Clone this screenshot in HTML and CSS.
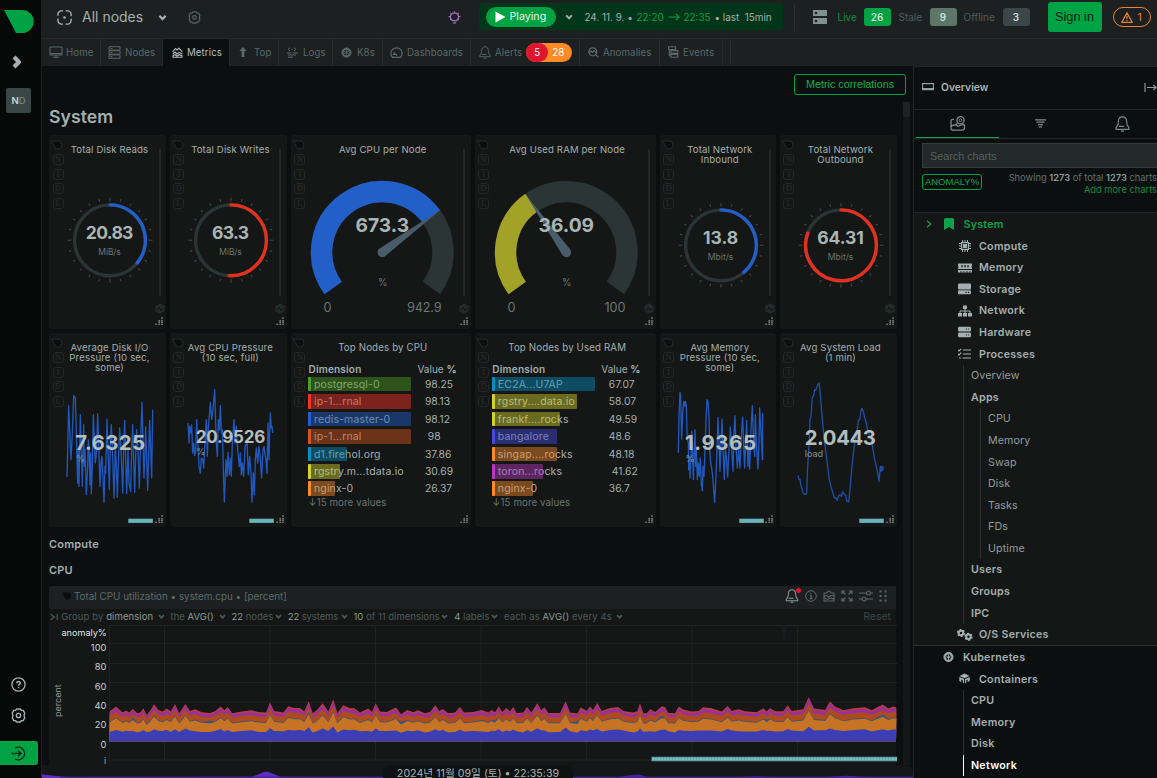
FILE: index.html
```html
<!DOCTYPE html>
<html lang="en">
<head>
<meta charset="utf-8">
<title>All nodes - Metrics</title>
<link rel="stylesheet" href="styles.css">
</head>
<body>
<svg class="defs" aria-hidden="true">
  <symbol id="chev" viewBox="0 0 8 8"><path d="M1.2 2.4 4 5.4 6.8 2.4" fill="none" stroke="currentColor" stroke-width="2"/></symbol>
  <symbol id="gear" viewBox="0 0 14 14"><path d="M5.4.9h3.2l1.1 1.2 1.7.1 1.4 2.6-.5 1.6v1.2l.5 1.6-1.4 2.6-1.7.1-1.1 1.2H5.4l-1.1-1.2-1.7-.1L1.2 9.2l.5-1.6V6.4l-.5-1.6 1.4-2.6 1.7-.1z" fill="none" stroke="currentColor" stroke-width="1.3"/><circle cx="7" cy="7" r="2" fill="none" stroke="currentColor" stroke-width="1.3"/></symbol>
  <symbol id="drop" viewBox="0 0 12 9"><path d="M.5.5H7a4 4 0 0 1 0 8H5z" fill="currentColor"/></symbol>
  <symbol id="bell" viewBox="0 0 14 15"><path d="M7 .8c-2.6 0-3.8 2-3.9 4.400L2.700 8.300 1 11v1.500h12V11l-1.700-2.700-.4-3.100C10.800 2.800 9.600.8 7 .8zM5.500 14.100h3M3.500 9.800h5" fill="none" stroke="currentColor" stroke-width="1.100"/></symbol>
  <symbol id="wheel" viewBox="0 0 12 12"><circle cx="6" cy="6" r="4" fill="none" stroke="currentColor" stroke-width="1.800"/><circle cx="6" cy="6" r="5" fill="none" stroke="currentColor" stroke-width="1"/><path d="M6 2v8M2.500 4l7 4M9.500 4l-7 4" stroke="currentColor" stroke-width=".9"/></symbol>
  <symbol id="grip" viewBox="0 0 8 8"><path d="M6.500.5h1v1h-1zM3.700 3.200h1v1h-1zM6.500 3.200h1v1h-1zM6.500 4.800h1v1h-1zM3.700 4.800h1v1h-1zM.6 6.800h1v1h-1zM3.700 6.800h1v1h-1zM6.500 6.800h1v1h-1z" fill="currentColor" stroke="currentColor" stroke-width=".3"/></symbol>
  <symbol id="pulse" viewBox="0 0 10 11"><path d="M5 .3 9.700 3v5L5 10.700.3 8V3z" fill="#262b2b"/><path d="M1.500 6.800h1.500l1.200-2.900L6 7.700l.8-1.500H8.500" fill="none" stroke="#0f1313" stroke-width=".9"/></symbol>
</svg>
<div class="app">
  <aside class="rail">
    <svg class="logo" viewBox="0 0 30 24"><path d="M0 0h18a11.700 11.500 0 0 1 0 23H12z" fill="#00a344"/></svg>
    <svg class="expand" viewBox="0 0 12 16"><path d="M3 3 8 8 3 13" fill="none" stroke="#a4b0af" stroke-width="4.200" stroke-linejoin="round"/></svg>
    <div class="avatar">N<span>D</span></div>
    <div class="rail-foot">
      <svg width="15" height="15" viewBox="0 0 15 15"><circle cx="7.500" cy="7.500" r="6.600" fill="none" stroke="currentColor" stroke-width="1.300"/><path d="M5.800 6.200c0-2.200 3.500-2.200 3.500-.1 0 1.300-1.700 1.200-1.700 2.600M7.600 9.900v1.400" fill="none" stroke="currentColor" stroke-width="1.500"/></svg>
      <svg width="15" height="15"><use href="#gear"/></svg>
      <div class="signin-rail"><svg width="15" height="15" viewBox="0 0 15 15"><path d="M4 2.100a6.300 6.300 0 1 1 0 10.800M.5 7.500h9M7 4.700l3 2.800-3 2.800" fill="none" stroke="#052e18" stroke-width="1.500"/></svg></div>
    </div>
  </aside>
  <div class="main">
    <header class="top">
      <svg class="i-space" viewBox="0 0 15 15"><rect x=".9" y=".9" width="13.200" height="13.200" rx="3.500" fill="none" stroke="currentColor" stroke-width="1.400" stroke-dasharray="9.100 2.600" stroke-dashoffset="-4.300"/><circle cx="7.500" cy="7.500" r="1.300" fill="currentColor"/></svg>
      <span class="room">All nodes</span>
      <svg class="i-chev"><use href="#chev"/></svg>
      <svg class="i-gear"><use href="#gear"/></svg>
      <svg class="i-bulb" viewBox="0 0 13 13"><path d="M4.700 9.700C2.300 8 2 5.500 3 3.700c1.500-2.500 5.500-2.500 7 0 1 1.800.7 4.300-1.700 6zM4.900 11.800h3.200" fill="none" stroke="currentColor" stroke-width="1.300"/><path d="M6.500.3v1.400M2 1.700l1.100 1M11 1.700l-1.100 1M.6 5.500h1.500M12.400 5.500h-1.500M2 9.200l1-.9M11 9.200l-1-.9" stroke="currentColor"/></svg>
      <div class="time">
        <div class="play"><svg viewBox="0 0 11 12"><path d="M.5.500 10.500 6 .5 11.500z" fill="#fff"/></svg>Playing</div>
        <svg class="t-chev"><use href="#chev"/></svg>
        <span class="t-date">24. 11. 9. •</span><span class="t-a">22:20</span>
        <svg class="t-arr" viewBox="0 0 12 8"><path d="M.5 4H11M8 1l3 3-3 3" fill="none" stroke="currentColor" stroke-width="1.100"/></svg>
        <span class="t-b">22:35</span><span class="t-last">• last&nbsp; 15min</span>
      </div>
      <i class="vr"></i>
      <svg class="i-srv" viewBox="0 0 14 14"><path d="M0 0h14v6H0zM0 8h14v6H0z" fill="currentColor"/><circle cx="3" cy="3" r="1.300" fill="#1c2021"/><circle cx="3" cy="11" r="1.300" fill="#1c2021"/></svg>
      <span class="s-live">Live</span><b class="badge b1">26</b>
      <span class="s-stale">Stale</span><b class="badge b2">9</b>
      <span class="s-off">Offline</span><b class="badge b3">3</b>
      <button class="signin">Sign in</button>
      <div class="warn"><svg viewBox="0 0 12 11"><path d="M6 .9 11.200 10.300H.8z" fill="none" stroke="currentColor" stroke-width="1.200" stroke-linejoin="round"/><path d="M6 4v3M6 8v1.200" stroke="currentColor" stroke-width="1.200"/></svg>1</div>
    </header>
    <nav class="tabs">
      <div class="tab w-home"><svg width="14" height="12" viewBox="0 0 14 12"><path d="M1 1h12v8H1zM1 7.500h12M7 9v2M4 11.300h6" fill="none" stroke="currentColor"/></svg>Home</div>
      <div class="tab w-nodes"><svg width="13" height="13" viewBox="0 0 13 13"><path d="M1 .7h11v3.400H1zM1 4.800h11v3.400H1zM1 8.900h11v3.400H1zM2.500 2.400h2M2.500 6.500h2M2.500 10.600h2" fill="none" stroke="currentColor"/></svg>Nodes</div>
      <div class="tab on w-metrics"><svg width="11" height="11" viewBox="0 0 11 11"><path d="M.6 4.800 3.500 1.500 5 3l2-1.700L10.400 5M.8 7l2.200-2L5 7l2.200-1.700L10.300 7M1 10.300V8.500l2-.8 2 1.300 2.200-1.300 2.800 1v1.600z" fill="none" stroke="currentColor" stroke-width="1.100"/></svg>Metrics</div>
      <div class="tab w-top"><svg width="8" height="10" viewBox="0 0 8 10"><path d="M4 0 7.700 4H5.400v6H2.600V4H.3z" fill="currentColor"/></svg>Top</div>
      <div class="tab w-logs"><svg width="11" height="11" viewBox="0 0 11 11"><path d="M3 .8 1 2.400 3 4M7 .8l2 1.600L7 4M5.500 2.400h-1M0 6h4M5.500 6H11M1 8h8M1 10.200h5" fill="none" stroke="currentColor"/></svg>Logs</div>
      <div class="tab w-k8s"><svg width="11" height="11"><use href="#wheel"/></svg>K8s</div>
      <div class="tab w-dash"><svg width="13" height="11" viewBox="0 0 13 11"><path d="M2.500 10.300A5.600 5.600 0 1 1 10.500 10.300zM3.500 5.500l3 2.500M3 7.500h3.500v1.300" fill="none" stroke="currentColor" stroke-width="1.200"/></svg>Dashboards</div>
      <div class="tab w-alerts"><svg width="12" height="13"><use href="#bell"/></svg>Alerts<span class="pill"><b>5</b><i>28</i></span></div>
      <div class="tab w-anom"><svg width="11" height="11" viewBox="0 0 11 11"><circle cx="4.800" cy="4.800" r="4" fill="none" stroke="currentColor" stroke-width="1.200"/><path d="M7.600 7.600 10.300 10.300M1 6l2-2 1.500 1.500L6 3.500 8 6" fill="none" stroke="currentColor" stroke-width="1.200"/></svg>Anomalies</div>
      <div class="tab w-events"><svg width="11" height="12" viewBox="0 0 11 12"><path d="M.6.7h7v2.800h-7zM2.800 4.600h7v2.800h-7zM2.800 8.500h7v2.800h-7zM1.300 3.500v6.300h1.500" fill="none" stroke="currentColor" stroke-width="1.100"/></svg>Events</div>
      <i class="tab-end"></i>
    </nav>
    <div class="body">
      <section class="content">
        <div class="toolbar"><button class="mc">Metric correlations</button></div>
        <div class="scroll">
          <div class="page">
            <h1>System</h1>
            <div class="grid">
              <div class="card"><h3>Total Disk Reads</h3><svg class="pie" data-y="105.300" data-end="130" data-c="#225fc9" data-v="20.83" data-w="47.500" data-u="MiB/s" data-uw="22.500"></svg></div>
              <div class="card"><h3>Total Disk Writes</h3><svg class="pie" data-y="105.300" data-end="183" data-c="#e3311f" data-v="63.3" data-w="37" data-u="MiB/s" data-uw="22.500"></svg></div>
              <div class="card"><h3>Avg CPU per Node</h3><svg class="gauge" data-f="0.714" data-c="#225fc9" data-v="673.3" data-w="53.500" data-max="942.9" data-mw="34.500" data-mx="133.300"></svg></div>
              <div class="card"><h3>Avg Used RAM per Node</h3><svg class="gauge" data-f="0.3609" data-c="#a2a128" data-v="36.09" data-w="55.500" data-max="100" data-mw="21" data-mx="140"></svg></div>
              <div class="card"><h3>Total Network Inbound</h3><svg class="pie" data-y="110.300" data-end="140" data-c="#225fc9" data-v="13.8" data-w="35" data-u="Mbit/s" data-uw="25.500"></svg></div>
              <div class="card"><h3>Total Network Outbound</h3><svg class="pie" data-y="110.300" data-end="290" data-c="#e3311f" data-v="64.31" data-w="46.500" data-u="Mbit/s" data-uw="25.500"></svg></div>

              <div class="card spark"><h3>Average Disk I/O Pressure (10 sec, some)</h3><svg class="line" data-s="0"></svg></div>
              <div class="card spark"><h3>Avg CPU Pressure (10 sec, full)</h3><svg class="line" data-s="1"></svg></div>
              <div class="card list"><h3>Top Nodes by CPU</h3><div class="table" data-t="0"></div></div>
              <div class="card list"><h3>Top Nodes by Used RAM</h3><div class="table" data-t="1"></div></div>
              <div class="card spark"><h3>Avg Memory Pressure (10 sec, some)</h3><svg class="line" data-s="2"></svg></div>
              <div class="card spark"><h3>Avg System Load (1 min)</h3><svg class="line" data-s="3"></svg></div>
            </div>
            <h2>Compute</h2>
            <h2 class="second">CPU</h2>
            <div class="chart">
              <div class="chart-head"><svg class="c-drop"><use href="#drop"/></svg><span class="c-title">Total CPU utilization • system.cpu • [percent]</span>
                <div class="tools">
                  <span class="bellwrap"><svg width="14" height="14"><use href="#bell"/></svg><i></i></span>
                  <svg width="12" height="12" viewBox="0 0 12 12"><circle cx="6" cy="6" r="5.300" fill="none" stroke="currentColor"/><path d="M6 3v1.300M5 5.500h1.200V8.500M4.700 8.700h2.800" fill="none" stroke="currentColor" stroke-width="1.200"/></svg>
                  <svg width="12" height="12" viewBox="0 0 12 12"><path d="M1 3h3l1-1.700h2L8 3h3v8H1zM1.500 6l2-.5 2 1.500L8 5.500l2.500.500M1.500 8l3 1.500 3-1.500 3 1" fill="none" stroke="currentColor" stroke-width="1.100"/></svg>
                  <svg width="12" height="12" viewBox="0 0 12 12"><path d="M1 4V1h3M8 1h3v3M11 8v3H8M4 11H1V8M1 1l3.500 3.500M11 1 7.500 4.500M11 11 7.500 7.500M1 11l3.500-3.500" fill="none" stroke="currentColor" stroke-width="1.100"/></svg>
                  <svg width="14" height="12" viewBox="0 0 14 12"><path d="M0 3h7.500M11.500 3H14M0 9h3M7 9h7" stroke="currentColor" stroke-width="1.200"/><circle cx="9.500" cy="3" r="2" fill="none" stroke="currentColor" stroke-width="1.200"/><circle cx="5" cy="9" r="2" fill="none" stroke="currentColor" stroke-width="1.200"/></svg>
                  <svg width="8" height="12" viewBox="0 0 8 12"><path d="M.5.500h2v2h-2zM5.500.500h2v2h-2zM.5 5h2v2h-2zM5.500 5h2v2h-2zM.5 9.500h2v2h-2zM5.500 9.500h2v2h-2z" fill="currentColor"/></svg>
                </div>
              </div>
              <div class="filters">
                <svg width="8" height="8" viewBox="0 0 8 8"><path d="M.8 1 4 4 .8 7M4 4h1.500M7.200 1v6" fill="none" stroke="currentColor" stroke-width="1.100"/></svg>
                <span class="f1">Group by <b>dimension</b></span><svg class="fc"><use href="#chev"/></svg>
                <span class="f2">the <b>AVG()</b></span><svg class="fc"><use href="#chev"/></svg>
                <span class="f3"><b>22</b> nodes</span><svg class="fc"><use href="#chev"/></svg>
                <span class="f4"><b>22</b> systems</span><svg class="fc"><use href="#chev"/></svg>
                <span class="f5"><b>10</b> of 11 dimensions</span><svg class="fc"><use href="#chev"/></svg>
                <span class="f6"><b>4</b> labels</span><svg class="fc"><use href="#chev"/></svg>
                <span class="f7">each as <b>AVG()</b> every 4s</span><svg class="fc"><use href="#chev"/></svg>
                <span class="reset">Reset</span>
              </div>
              <svg class="area" width="848" height="141" viewBox="0 0 848 141"></svg>
            </div>
          </div>
          <div class="sbar"><i></i></div>
        </div>
        <div class="playbar">
          <svg width="872" height="13" viewBox="0 0 872 13"><path d="M0 13V9.500L12 11l18 .8 180-.3 5-1.500 7-3h4l7 3 4 1.500 100 .3h240l15-2 5-.3 8 2.300h90l20-.5 20 .5h50l20-1 20 1h60V13z" fill="#4423a0"/><path d="M210 11.500l5-1.500 8-3.300h3l8 3.300 4 1.500zM0 9.500 18 11.500v1.500H0z" fill="#5c2ec4"/></svg>
          <div class="clock">2024년 11월 09일 (토) • 22:35:39</div>
        </div>
      </section>
      <aside class="side">
        <div class="side-head"><svg width="12" height="8" viewBox="0 0 12 8"><path d="M.5.700h11v6H.5zM.5 5.600h11" fill="none" stroke="currentColor" stroke-width="1.200"/></svg><b>Overview</b><svg class="collapse" width="13" height="9" viewBox="0 0 13 9"><path d="M1 0v9M3 4.500h9M9.500 2l2.500 2.500L9.500 7" fill="none" stroke="currentColor" stroke-width="1.100"/></svg></div>
        <div class="side-tabs">
          <div class="on"><svg width="16" height="15" viewBox="0 0 16 15"><path d="M4 3.500C.3 3 1 5 1 7v5c0 1.800 1 2.200 2.500 2.200h8c2 0 3-.5 3-2.500V9.800c0-.8-.5-1.300-1.500-1.300L8.500 10 4.500 8.800C3 8.800 1.500 9.500 1.500 11" fill="none" stroke="currentColor" stroke-width="1.300"/><circle cx="10.500" cy="4.300" r="3.600" fill="none" stroke="currentColor" stroke-width="1.300"/><circle cx="10.500" cy="4.300" r="1.300" fill="none" stroke="currentColor"/><path d="m7.500 7-2 2" stroke="currentColor" stroke-width="1.200"/></svg></div>
          <div><svg width="11" height="9" viewBox="0 0 11 9"><path d="M0 .8h11M1.500 3.200h8M3 5.600h5M4 7.900h3" stroke="currentColor" stroke-width="1.300"/></svg></div>
          <div><svg class="side-bell" width="15" height="16"><use href="#bell"/></svg></div>
        </div>
        <div class="side-search">
          <div class="search">Search charts</div>
          <div class="meta"><span class="anom">ANOMALY%</span><p>Showing <b>1273</b> of total <b>1273</b> charts<br><em>Add more charts</em></p></div>
        </div>
        <div class="tree sys">
          <div class="r r0 act"><svg class="cv" viewBox="0 0 6 8"><path d="M1 .8 4.800 4 1 7.200" fill="none" stroke="currentColor" stroke-width="1.300"/></svg><svg class="ic0" viewBox="0 0 10 12"><path d="M0 1.500Q0 0 1.500 0h7Q10 0 10 1.500V12L5 9 0 12z" fill="currentColor"/></svg>System</div>
          <div class="r r1"><svg viewBox="0 0 14 12"><path d="M3 2h8v8H3z" fill="currentColor"/><path d="M4.500 3.500h5v5h-5z" fill="none" stroke="#151716" stroke-width=".8"/><path d="M4.500 0v2M4.500 10v2M7 0v2M7 10v2M9.500 0v2M9.500 10v2M1 3.500h2M1 6h2M1 8.500h2M11 3.500h2M11 6h2M11 8.500h2" stroke="currentColor"/></svg>Compute</div>
          <div class="r r1"><svg viewBox="0 0 14 12"><path d="M0 1.500h14V4a.8.800 0 0 0 0 1.500V7H0V5.500A.8.800 0 0 0 0 4zM0 8h14v2.500H0z" fill="currentColor"/><path d="M4 3v2.500M7 3v2.500M10 3v2.500M3 9.300v1.200M6 9.300v1.200M9 9.300v1.200M12 9.300v1.200" stroke="#151716" stroke-width="1.200"/></svg>Memory</div>
          <div class="r r1"><svg viewBox="0 0 14 12"><rect y=".5" width="13" height="6" rx="1" fill="currentColor"/><rect y="7.300" width="13" height="4" rx="1" fill="currentColor"/><path d="M7.500 9.300h1.200M10 9.300h1.200" stroke="#151716" stroke-width="1.200"/></svg>Storage</div>
          <div class="r r1"><svg viewBox="0 0 14 12"><path d="M5 .5h4v3.500H5zM0 8h4v3.500H0zM5 8h4v3.500H5zM10 8h4v3.500h-4z" fill="currentColor"/><path d="M7 4v4M2 8V6h10v2" fill="none" stroke="currentColor"/></svg>Network</div>
          <div class="r r1"><svg viewBox="0 0 14 12"><rect y=".7" width="13" height="4.800" rx="1.200" fill="currentColor"/><rect y="6.500" width="13" height="4.800" rx="1.200" fill="currentColor"/><path d="M8 3h1M10.200 3h1M8 9h1M10.200 9h1" stroke="#151716"/></svg>Hardware</div>
          <div class="r r1"><svg viewBox="0 0 14 12"><path d="M0 2l1 1L3.200.8M0 5.800l1 1 2.200-2.200M1 10h2M5 2h8M5 6h8M4.500 10H13" fill="none" stroke="currentColor" stroke-width="1.200"/></svg>Processes</div>
          <div class="branch b-one">
            <div class="r thin">Overview</div>
            <div class="r">Apps</div>
            <div class="branch b-two"><div class="r thin">CPU</div><div class="r thin">Memory</div><div class="r thin">Swap</div><div class="r thin">Disk</div><div class="r thin">Tasks</div><div class="r thin">FDs</div><div class="r thin">Uptime</div></div>
            <div class="r">Users</div><div class="r">Groups</div><div class="r">IPC</div>
          </div>
          <div class="r r1"><svg class="gears" viewBox="0 0 16 12"><circle cx="4" cy="4" r="2.300" fill="none" stroke="currentColor" stroke-width="2"/><circle cx="4" cy="4" r="3.500" fill="none" stroke="currentColor" stroke-width="1.200" stroke-dasharray="1.900 1.760"/><circle cx="11.500" cy="7.800" r="2.300" fill="none" stroke="currentColor" stroke-width="2"/><circle cx="11.500" cy="7.800" r="3.500" fill="none" stroke="currentColor" stroke-width="1.200" stroke-dasharray="1.900 1.760"/></svg>O/S Services</div>
        </div>
        <div class="tree kub">
          <div class="r r0"><svg class="ic0 k" viewBox="0 0 12 12"><use href="#wheel"/></svg>Kubernetes</div>
          <div class="r r1"><svg viewBox="0 0 14 12"><path d="M1.500 3 6.500.500 11.500 3 6.500 5.200z" fill="currentColor"/><path d="M1.300 4v4l2 1V6.500l1.500.7V9.600l1.300.6V6zM11.700 4v4l-2 1V6.500l-1.300.7V9.600l-1.300.6V6z" fill="currentColor"/></svg>Containers</div>
          <div class="branch b-one"><div class="r">CPU</div><div class="r">Memory</div><div class="r">Disk</div><div class="r sel">Network</div></div>
        </div>
      </aside>
    </div>
  </div>
</div>
<script src="charts.js"></script>
</body>
</html>
```
FILE: styles.css
```css
* { box-sizing: border-box; }
body { margin: 0; width: 1157px; height: 778px; overflow: hidden; background: #0b0f10; color: #a4b0af; font-family: Inter, "Noto Sans CJK KR", sans-serif; font-size: 10px; }
svg { display: block; flex: none; }
.defs { position: absolute; width: 0; height: 0; }
i, em { font-style: normal; }
.app { display: flex; height: 778px; }
.rail { width: 42px; flex: none; background: #060908; border-right: 1px solid #1d2121; display: flex; flex-direction: column; align-items: flex-start; }
.logo { width: 30px; height: 24px; margin: 10px 0 0 4px; }
.expand { width: 12px; height: 16px; margin: 20px 0 0 11px; }
.avatar { width: 25px; height: 25px; margin: 18px 0 0 6px; border-radius: 2px; background: #3a4546; color: #ccd5d4; font-weight: 600; font-size: 9.500px; display: flex; align-items: center; justify-content: center; }
.avatar span { color: #6f8482; font-weight: 500; }
.rail-foot { margin-top: auto; height: 101px; display: flex; flex-direction: column; gap: 16px; }
.rail-foot > svg { margin-left: 11px; }
.signin-rail { width: 38px; height: 24px; background: #00a344; border-radius: 0 3px 3px 0; margin-top: 2px; display: flex; flex: none; align-items: center; padding-left: 11px; }
.main { flex: 1; min-width: 0; display: flex; flex-direction: column; }
.top { height: 39px; flex: none; background: #1c2021; border-bottom: 1px solid #262b2b; display: flex; align-items: center; padding-bottom: 4px; white-space: nowrap; font-size: 10px; }
.i-space { width: 15px; height: 15px; margin-left: 15px; }
.room { font-size: 14px; width: 75px; margin-left: 10px; margin-top: -1px; color: #a4b0af; }
.i-chev { width: 9px; height: 9px; margin-left: .500px; }
.i-gear { width: 13px; height: 13px; margin-left: 21px; color: #586465; }
.i-bulb { width: 13px; height: 13px; margin-left: 247px; color: #a76fc0; }
.time { width: 304px; height: 27px; margin: -1px 0 0 18px; background: #02361a; border-radius: 3px; display: flex; align-items: center; padding-left: 7px; font-size: 9.900px; }
.time > svg, .time > span { flex: none; }
.play { width: 70px; height: 20px; border-radius: 10px; background: #00a344; color: #e9f6ee; display: flex; align-items: center; padding-left: 9px; gap: 4px; font-size: 10.700px; }
.play svg { width: 11px; height: 12px; }
.t-chev { width: 8px; height: 8px; margin-left: 9px; }
.t-date { width: 52px; margin-left: 12px; }
.t-a, .t-b { color: #12984a; width: 31px; }
.t-arr { width: 12px; height: 8px; color: #12984a; margin-right: 4px; }
.vr { width: 1px; height: 27px; background: #2a3030; margin-left: 11px; }
.i-srv { width: 14px; height: 14px; margin-left: 18px; color: #81908f; }
.s-live { width: 26px; margin-left: 11px; color: #0b8d40; }
.s-stale { width: 31px; margin-left: 8px; color: #4f5e5d; }
.s-off { width: 39px; margin-left: 7px; color: #4f5e5d; }
.badge { width: 27px; height: 18px; border-radius: 3px; display: flex; align-items: center; justify-content: center; color: #dfe8e6; font-weight: 500; }
.b1 { background: #00a344; }
.b2 { background: #5c776a; }
.b3 { background: #3a4647; }
.signin { width: 54px; height: 30px; margin-left: 18px; background: #00a344; border: 0; border-radius: 3px; padding: 0 0 1px; color: #0b2415; font: 12.800px "Liberation Sans", sans-serif; }
.warn { width: 38px; height: 20px; margin-left: 11px; border: 1px solid #f1842a; border-radius: 10px; color: #f1842a; display: flex; align-items: center; gap: 5px; padding-left: 7px; font-size: 10.500px; }
.warn svg { width: 12px; height: 11px; }
.tabs { height: 27px; flex: none; background: #1c2021; display: flex; font-size: 9.700px; letter-spacing: .1px; color: #596968; }
.tab { height: 27px; display: flex; align-items: center; border-right: 1px solid #262b2b; white-space: nowrap; padding-bottom: 1px; }
.tab.on { background: #0b0f10; color: #b3bfbe; }
.w-home { width: 59px; padding-left: 7px; gap: 3px; }
.w-nodes { width: 62px; padding-left: 7px; gap: 4px; }
.w-metrics { width: 67px; padding-left: 9px; gap: 4px; }
.w-top { width: 49px; padding-left: 9px; gap: 7px; }
.w-logs { width: 54px; padding-left: 8px; gap: 5px; }
.w-k8s { width: 50px; padding-left: 8px; gap: 5px; }
.w-dash { width: 88px; padding-left: 7px; gap: 4px; }
.w-alerts { width: 109px; padding-left: 8px; gap: 4px; }
.w-anom { width: 80px; padding-left: 8px; gap: 4px; }
.w-events { width: 63px; padding-left: 8px; gap: 4px; }
.pill { width: 46px; height: 19px; border-radius: 10px; background: #fc8a25; display: flex; color: #fff; align-items: center; }
.pill b { width: 22px; height: 19px; border-radius: 10px; background: #df152f; text-align: center; line-height: 19px; font-weight: 400; }
.pill i { flex: 1; text-align: center; padding-right: 4px; }
.tab-end { width: 1px; height: 22px; margin: 2px 0 0 7px; background: #2a3030; }
.body { flex: 1; min-height: 0; display: flex; }
.content { width: 871px; flex: none; display: flex; flex-direction: column; }
.toolbar { height: 36px; flex: none; padding: 8px 0 0 752px; }
.mc { width: 112px; height: 21px; display: block; border: 1px solid #00a344; border-radius: 3px; background: none; color: #0fae4e; font: 10.800px "Liberation Sans", sans-serif; padding: 0 0 1px; }
.scroll { flex: 1; min-height: 0; display: flex; overflow: hidden; }
.page { width: 861px; padding-left: 7px; flex: none; }
.sbar { width: 7px; background: #131718; }
.sbar i { display: block; height: 15px; background: #1e2424; border-radius: 2px; }
h1 { margin: 4px 0 0; height: 29px; font-size: 17.700px; line-height: 22px; font-weight: 600; }
.grid { display: grid; grid-template-columns: 117px 117px 180px 181px 116.500px 117px; column-gap: 3.900px; row-gap: 4px; grid-template-rows: 194px 194px; }
.card { background: #151716; border-radius: 3px; display: grid; grid-template-columns: 16px 1fr 11px; grid-template-rows: 194px; overflow: hidden; }
.card > .nidl { grid-column: 1; grid-row: 1; padding: 5px 0 0 2px; display: flex; flex-direction: column; color: #0a0e0e; }
.card > .nidl .d { width: 12px; height: 10px; stroke: #262a2a; margin-bottom: 4px; }
.card > .nidl span { width: 11px; height: 11px; margin: 0 0 3.500px 1.500px; border: 1px solid #232727; border-radius: 3px; color: #2b2f2f; font: 8px/9px "Liberation Serif", serif; text-align: center; }
.card h3 { grid-column: 2; grid-row: 1; margin: 10px 0 0; font-size: 9.600px; line-height: 10px; font-weight: 400; text-align: center; z-index: 1; justify-self: center; letter-spacing: .15px; height: 32px; position: relative; left: -.500px; }
.card .pie, .card .gauge, .card .line { grid-column: 1 / 4; grid-row: 1; width: 100%; height: 194px; }
.card > .right { grid-column: 3; grid-row: 1; display: flex; flex-direction: column; }
.right .bar { width: 2px; height: 147px; margin: 14px 0 0 3.500px; background: #222727; }
.right .p { width: 10px; height: 11px; margin: 7px 0 0 -.500px; }
.right .g { width: 8px; height: 8px; margin: 3px 0 0 0; color: #a0a9a7; }
.spark .bar, .list .bar, .spark .p, .list .p { visibility: hidden; }
.spark .g, .list .g { margin-top: 3px; }
.list h3 { font-size: 9.700px; }
.table { grid-column: 1 / 4; grid-row: 1; margin: 29px 0 0 17.700px; font-size: 10.300px; }
.row { display: flex; height: 17.450px; }
.th { height: 14.800px; line-height: 14px; font-size: 10px; }
.th b { width: 109px; font-weight: 600; letter-spacing: .2px; }
.track { position: relative; width: 103px; height: 14.700px; line-height: 15px; padding-left: 5.500px; white-space: nowrap; font-size: 10.500px; letter-spacing: .15px; }
.fill { position: absolute; left: 0; top: 0; height: 14.700px; border-radius: 1px; opacity: .45; background: var(--c); }
.edge { position: absolute; left: 0; top: 0; width: 3px; height: 14.700px; border-radius: 1px; background: var(--c); }
.val { margin-left: 13.500px; line-height: 15px; }
.more { color: #687675; font-size: 9.700px; line-height: 12px; margin-top: -1.500px; letter-spacing: .1px; }
h2 { margin: 10px 0 0; height: 15px; line-height: 15px; font-size: 11px; font-weight: 600; letter-spacing: .2px; }
h2.second { margin-top: 11px; }
.chart { width: 847px; margin-top: 8px; background: #151716; }
.chart-head { height: 23px; background: #1c2021; border-radius: 2px 2px 0 0; display: flex; align-items: center; padding: 0 10px 3px 12px; color: #5c6c6b; }
.c-drop { width: 11px; height: 8px; color: #0a0e0e; margin-right: 2px; }
.c-title { font-size: 9.900px; }
.tools { margin-left: auto; display: flex; align-items: center; gap: 6px; color: #5b6968; margin-right: -1px; }
.bellwrap { position: relative; color: #8b9897; }
.bellwrap i { position: absolute; right: -2px; top: -1px; width: 5px; height: 5px; border-radius: 50%; background: #df152f; }
.filters { height: 16px; display: flex; align-items: center; padding: 0 0 1px 1px; color: #4d5958; font-size: 9.500px; white-space: nowrap; }
.filters b { color: #8c9998; font-weight: 400; }
.filters span { margin-left: 3.300px; flex: none; }
.filters .fc { width: 7px; height: 7px; margin-left: 4px; margin-right: 2.500px; }
.f1 { width: 92.500px; letter-spacing: .1px; }
.f2 { width: 44px; }
.f3 { width: 39.500px; }
.f4 { width: 49px; letter-spacing: -.1px; }
.f5 { width: 84px; }
.f6 { width: 33px; }
.f7 { width: 108px; letter-spacing: .1px; }
.filters .reset { margin-left: auto; margin-right: 5px; font-size: 10.500px; color: #3c4645; }
.playbar { height: 13px; flex: none; background: #151617; position: relative; border-radius: 0 8px 0 0; }
.clock { position: absolute; left: 341px; top: 0; width: 190px; height: 24px; background: #0e1212; border-radius: 9px; text-align: center; font-size: 10.700px; line-height: 18px; white-space: nowrap; }
.side { width: 244px; flex: none; border-left: 1px solid #212626; overflow: hidden; display: flex; flex-direction: column; border-top: 1px solid #212626; background: #0b0f10; }
.side > * { flex: none; }
.side-head { height: 43px; display: flex; align-items: center; border-bottom: 1px solid #212626; padding: 0 0 2px 8px; color: #93a09f; }
.side-head b { margin-left: 7px; font-size: 10.300px; font-weight: 600; color: #a9b5b4; }
.collapse { margin-left: auto; }
.side-tabs { height: 29px; display: flex; border-bottom: 1px solid #212626; padding-left: 2px; color: #7d8a89; }
.side-tabs div { width: 83px; flex: none; display: flex; align-items: center; justify-content: center; border-bottom: 1px solid transparent; }
.side-tabs .on { border-color: #14a455; }
.side-bell { margin-right: 3px; }
.side-search { height: 74px; padding: 4px 0 0 8px; border-bottom: 1px solid #212626; }
.search { height: 25px; background: #232828; border: 1px solid #343b3b; border-right: 0; padding-left: 7px; line-height: 24px; color: #536160; font-size: 10.800px; font-family: "Liberation Sans", sans-serif; }
.meta { display: flex; justify-content: space-between; padding-top: 4px; color: #637170; }
.anom { width: 60px; height: 16px; margin-top: 2px; border: 1px solid #00a344; border-radius: 3px; color: #0fa24a; font: 9.500px/14px "Liberation Sans", sans-serif; text-align: center; }
.meta p { margin: 0; text-align: right; font-size: 9.300px; line-height: 12px; }
.meta b { font-weight: 600; color: #8b9897; }
.meta em { color: #0c8c40; }
.tree { font-size: 10.700px; font-weight: 600; letter-spacing: .25px; }
.sys { background: #151716; height: 433px; border-bottom: 1px solid #2a2f2f; }
.r { height: 21.600px; display: flex; align-items: center; }
.r0 { padding-left: 29px; }
.act { padding-left: 12px; color: #0ca04a; margin-top: .700px; }
.kub { padding-top: .700px; }
.cv { width: 6px; height: 8px; margin-right: 12px; }
.ic0 { width: 10px; height: 12px; margin-right: 9.500px; }
.ic0.k { width: 11px; height: 12px; margin-right: 9px; }
.r1 { padding-left: 44px; }
.r1 svg { width: 14px; height: 12px; margin-right: 7px; }
.r1 .gears { width: 16px; margin: 0 6px 0 -1px; }
.branch { border-left: 1px solid #2b3030; }
.b-one { margin-left: 49px; }
.b-one > .r { padding-left: 7px; }
.b-two { margin-left: 16px; }
.b-two > .r { padding-left: 7px; }
.thin { font-weight: 400; color: #919d9c; letter-spacing: .1px; }
.b-one > .sel { color: #fff; border-left: 1px solid #fff; margin-left: -1px; }
.area text, .card text { font-family: Inter, sans-serif; }
```
FILE: charts.js
```js
const polar = (cx, cy, r, deg) => {
  const a = (deg - 90) * Math.PI / 180;
  return [(cx + r * Math.cos(a)).toFixed(2), (cy + r * Math.sin(a)).toFixed(2)];
};
const arc = (cx, cy, r, a, b) => {
  const [x1, y1] = polar(cx, cy, r, a), [x2, y2] = polar(cx, cy, r, b);
  return `M${x1} ${y1}A${r} ${r} 0 ${b - a > 180 ? 1 : 0} 1 ${x2} ${y2}`;
};
const label = (x, y, size, text, w, fill, extra = '') =>
  `<text x="${x}" y="${y}" font-size="${size}" textLength="${w}" fill="${fill}" ${extra}>${text}</text>`;

document.querySelectorAll('.card').forEach(card => {
  card.insertAdjacentHTML('afterbegin',
    '<div class="nidl"><svg class="d"><use href="#drop"/></svg><span>N</span><span>I</span><span>D</span><span>L</span></div>');
  card.insertAdjacentHTML('beforeend',
    '<div class="right"><i class="bar"></i><svg class="p"><use href="#pulse"/></svg><svg class="g"><use href="#grip"/></svg></div>');
});

document.querySelectorAll('.pie').forEach(el => {
  const d = el.dataset, cx = 61, cy = +d.y;
  let out = '';
  for (let a = 0; a < 360; a += 15) {
    const major = a % 90 === 0;
    const [x1, y1] = polar(cx, cy, major ? 38.7 : 40, a), [x2, y2] = polar(cx, cy, 42.5, a);
    out += `<path d="M${x1} ${y1}L${x2} ${y2}" stroke="#414949" stroke-width="1.1"/>`;
  }
  out += `<circle cx="${cx}" cy="${cy}" r="35.4" fill="none" stroke="#2c3536" stroke-width="3.400"/>`;
  out += `<path d="${arc(cx, cy, 35.4, 0, +d.end)}" fill="none" stroke="${d.c}" stroke-width="3.400" stroke-linecap="round"/>`;
  out += label(cx - .4 - d.w / 2, cy - 1.5, 17.5, d.v, d.w, '#a9b5b4', 'font-weight="700"');
  out += label(cx - .4 - d.uw / 2, cy + 14.5, 8.5, d.u, d.uw, '#687675');
  el.innerHTML = out;
});

document.querySelectorAll('.gauge').forEach(el => {
  const d = el.dataset, cx = 91.3, cy = 117.3, end = -126 + 252 * d.f;
  const tip = polar(cx, cy, 71, end), l = polar(cx, cy, 4.8, end - 90), r = polar(cx, cy, 4.8, end + 90);
  el.innerHTML =
    `<path d="${arc(cx, cy, 60.7, -126, 126)}" fill="none" stroke="#2c3536" stroke-width="21.400"/>` +
    `<path d="${arc(cx, cy, 60.7, -126, end)}" fill="none" stroke="${d.c}" stroke-width="21.400"/>` +
    `<path d="M${tip}L${l}A4.8 4.8 0 0 0 ${r}z" fill="#485c69"/>` +
    label(cx - d.w / 2, 97, 19.2, d.v, d.w, '#a9b5b4', 'font-weight="700"') +
    label(cx - 4.3, 151, 9.7, '%', 8.6, '#687675') +
    label(32.5, 176.7, 12.7, '0', 7.6, '#687675') +
    label(d.mx - d.mw / 2, 176.7, 12.7, d.max, d.mw, '#687675');
});

/* Sparkline samples: x,y pairs in thirds of a pixel, measured from the card's corner. */
const sparks = [
  { p: '54,432 56,360 59,218 62,290 66,380 70,300 74,188 79,195 82,300 86,450 88,350 90,460 94,245 97,350 100,460 104,275 106,400 108,350 112,485 116,400 118,320 120,340 123,455 125,360 127,482 130,400 133,245 136,320 139,390 143,350 146,243 149,330 153,460 156,390 159,370 162,440 165,508 168,400 170,420 174,258 177,350 181,470 184,330 187,275 191,370 195,495 199,340 202,400 205,493 209,360 212,285 216,350 221,480 224,350 227,262 230,380 233,482 237,350 240,450 245,475 248,350 251,275 254,380 257,478 260,370 263,290 267,350 271,465 275,320 279,208 282,330 285,435 288,350 290,282 293,380 296,472 300,330 302,262 305,350 308,435 311,230', v: '7.6325', x: 26.2, y: 116.7, w: 70, s: 20.5, u: '%', ux: 26.7, uy: 129.3, o: 1 },
  { p: '54,270 57,330 59,280 62,300 65,275 68,360 71,330 74,368 77,355 80,260 83,320 87,400 91,420 94,375 98,380 101,405 105,325 109,260 112,370 115,280 118,250 121,208 125,260 129,230 134,170 137,270 139,330 142,370 145,260 148,290 151,218 154,300 157,290 160,410 163,507 166,430 168,380 171,430 174,358 178,425 181,375 184,430 187,330 192,260 195,330 199,280 203,350 208,400 211,360 214,425 217,390 221,430 225,340 228,335 231,330 235,425 239,370 243,420 246,507 250,420 253,485 256,380 259,345 263,390 267,340 271,380 275,435 279,350 282,340 285,365 288,380 291,422 294,270 297,380 299,300 301,240 304,285 306,280 308,300', v: '20.9526', x: 25.7, y: 110, w: 69.5, s: 17, u: '%', ux: 26.2, uy: 122.3, o: 1 },
  { p: '55,360 57,250 60,178 62,190 65,318 68,240 71,205 74,220 76,205 79,218 81,300 83,320 85,330 86,410 88,370 90,435 93,370 95,295 97,330 100,440 103,350 105,290 107,400 109,350 112,440 115,390 118,430 121,375 124,455 127,473 129,400 132,430 135,350 138,260 141,200 144,205 147,250 149,350 152,390 155,405 158,430 161,470 164,508 168,430 171,350 174,253 177,330 180,415 183,330 186,258 189,350 193,440 196,350 199,370 203,432 207,350 211,282 215,350 219,415 222,300 225,248 228,340 232,405 236,350 240,405 244,310 248,252 251,340 254,405 257,330 260,262 264,400 267,340 269,408 273,290 277,218 281,330 284,370 286,245 290,350 294,408 297,320 299,225 303,300 307,380 308,242 308,380', v: '1.9365', x: 25, y: 116.7, w: 71, s: 20.5, u: '%', ux: 25.5, uy: 129.3, o: 1 },
  { p: '54,427 57,440 60,438 62,455 67,470 70,482 77,484 80,480 83,400 87,340 90,260 93,250 97,193 101,188 104,170 107,172 110,165 113,155 117,150 119,160 123,210 126,250 130,290 134,330 138,360 143,400 148,440 154,465 159,480 163,495 168,495 172,502 176,488 180,485 184,490 188,476 193,484 197,487 201,505 206,507 210,470 214,420 219,370 224,330 229,310 232,290 235,262 239,260 242,240 245,226 250,235 254,255 259,270 263,290 269,310 275,325 279,350 284,380 289,400 293,420 297,445 299,425 301,400 303,415 305,400 308,412 310,400', v: '2.0443', x: 24.7, y: 111.7, w: 71.2, s: 20.3, u: 'load', ux: 24.7, uy: 124, o: .85 }
];
document.querySelectorAll('.line').forEach(el => {
  const s = sparks[el.dataset.s];
  el.innerHTML =
    `<polyline points="${s.p}" transform="scale(.33333)" fill="none" stroke="#2058bd" stroke-width="4" stroke-linejoin="round" opacity="${s.o}"/>` +
    label(s.x, s.y, s.s, s.v, s.w, '#b3bebd', 'font-weight="700"') +
    `<text x="${s.ux}" y="${s.uy}" font-size="9" font-weight="500" fill="#7b8887">${s.u}</text>` +
    '<rect x="79.300" y="185.700" width="24.500" height="4.200" fill="#69b3ba"/>';
});

const tables = [
  [['postgresql-0', '98.25', 103, '#4ea024'], ['ip-1...rnal', '98.13', 103, '#f93324'], ['redis-master-0', '98.12', 103, '#2460cc'], ['ip-1...rnal', '&nbsp;98', 103, '#d8561d'], ['d1.firehol.org', '37.86', 39, '#078fc0'], ['rgstry.m...tdata.io', '30.69', 32, '#d3d12c'], ['nginx-0', '26.37', 27, '#f88a28']],
  [['EC2A...U7AP', '67.07', 102.7, '#078fc0'], ['rgstry....data.io', '58.07', 84.7, '#d3d12c'], ['frankf....rocks', '49.59', 67.7, '#d3d12c'], ['bangalore', '48.6', 64.7, '#4549dc'], ['singap....rocks', '48.18', 64.7, '#f88a28'], ['toron...rocks', '&nbsp;41.62', 50.7, '#b53abd'], ['nginx-0', '36.7', 40.7, '#f88a28']]
];
document.querySelectorAll('.table').forEach(el => {
  el.innerHTML = '<div class="row th"><b>Dimension</b><span>Value <strong>%</strong></span></div>' +
    tables[el.dataset.t].map(([n, v, w, c]) =>
      `<div class="row" style="--c:${c}"><div class="track">${n}<i class="fill" style="width:${w}px"></i><i class="edge"></i></div><span class="val">${v}</span></div>`).join('') +
    '<div class="more">↓15 more values</div>';
});

/* Stacked CPU chart: samples of the total, in thirds of a pixel, in two runs. */
const runA = '329,545 348,530 368,548 378,542 388,548 398,537 412,550 422,547 430,535 440,555 452,540 462,523 475,540 488,545 500,536 512,545 525,523 538,550 556,522 570,543 585,538 605,547 630,549 645,544 662,530 673,541 683,531 697,550 725,545 755,541 775,546 798,548 810,518 822,543 850,548 865,529 882,534 900,534 913,545 926,514 938,550 950,541 968,520 985,545 1000,508 1012,550 1030,526 1050,535 1062,534 1080,548 1105,536 1116,546 1127,520 1140,545 1160,546 1188,533 1203,553 1222,540 1240,547 1254,541 1275,550 1290,546 1306,526 1318,544 1328,537 1345,550 1365,548';
const runB = '0,531 12,548 40,546 65,540 85,548 95,540 105,547 116,530 127,546 139,534 150,544 160,531 170,549 190,548 201,531 214,548 232,520 244,541 253,532 265,549 300,549 317,514 330,548 352,551 362,532 380,543 390,530 399,540 412,519 425,543 450,534 475,531 490,543 520,548 532,544 540,520 550,550 560,550 571,538 585,546 605,530 615,531 625,549 645,550 656,530 670,539 695,545 715,543 730,532 755,535 785,545 803,528 815,543 835,538 855,544 890,547 910,535 920,545 930,534 945,544 970,544 983,526 995,543 1030,538 1046,502 1062,536 1080,538 1095,540 1110,515 1125,530 1150,541 1180,535 1215,532 1235,541 1268,524 1285,536 1300,530 1309,532';
const parse = (s, o) => s.split(' ').map(q => q.split(',').map(Number)).map(([x, y]) => [(x + o) / 3 - 49, (634 - y) / 3]);
const total = [...parse(runA, 0), ...parse(runB, 1380)];
const base = 116.3;
const layer = (f, fill) => `<path d="M60.3 ${base}` + total.map(([x, h], i) => `L${x.toFixed(1)} ${(base - f(h, i)).toFixed(1)}`).join('') + `L847 ${base}z" fill="${fill}"/>`;
let g = '';
for (let i = 0; i < 7; i++) g += `<path d="M${115.5 + 105.5 * i} 0V135" stroke="#1e2325"/>`;
[.5, 18.7, 38.5, 57.5, 77.2, 96.5, 135].forEach(y => { g += `<path d="M60 ${y}H848" stroke="#1e2325"/>`; });
g += '<path d="M60.500 0V135" stroke="#1e2325"/><path d="M735 0v15" stroke="#1a1c24" stroke-width="3"/>';
g += layer(h => h, '#bc3c44');
g += layer(h => h - 1.6, '#98309b');
g += layer(h => 25.5 + (h - 30) * .85, '#ae4b1d');
g += layer((h, i) => 19.8 + (h - 30) * .8 + (i % 17 === 5 ? 2 : .3), '#2c558a');
g += layer(h => 19.3 + (h - 30) * .8, '#c67424');
g += layer((h, i) => 10 + (h - 30) * .35 + ((i % 5) - 2) * .3, '#3b3eb5');
[['100', 26], ['80', 45], ['60', 65], ['40', 84], ['20', 103], ['0', 123]].forEach(([t, y]) => {
  g += `<text x="57.500" y="${y - .3}" text-anchor="end" font-size="9.400" fill="#c9d1d0">${t}</text>`;
});
g += '<text x="57.800" y="10.500" text-anchor="end" font-size="9.100" fill="#dfe6e5">anomaly%</text>';
g += '<text x="57" y="138.500" text-anchor="end" font-size="8.500" fill="#a4b0af">i</text>';
g += '<text transform="translate(12 92) rotate(-90)" font-size="9" fill="#8b9897">percent</text>';
g += '<rect x="602.500" y="131.700" width="245.500" height="4.600" fill="#4f8d93"/><path d="M603 134H848" stroke="#75bcc2" stroke-width="3" stroke-dasharray="2.600 .4"/>';
document.querySelector('.area').innerHTML = g;
```
